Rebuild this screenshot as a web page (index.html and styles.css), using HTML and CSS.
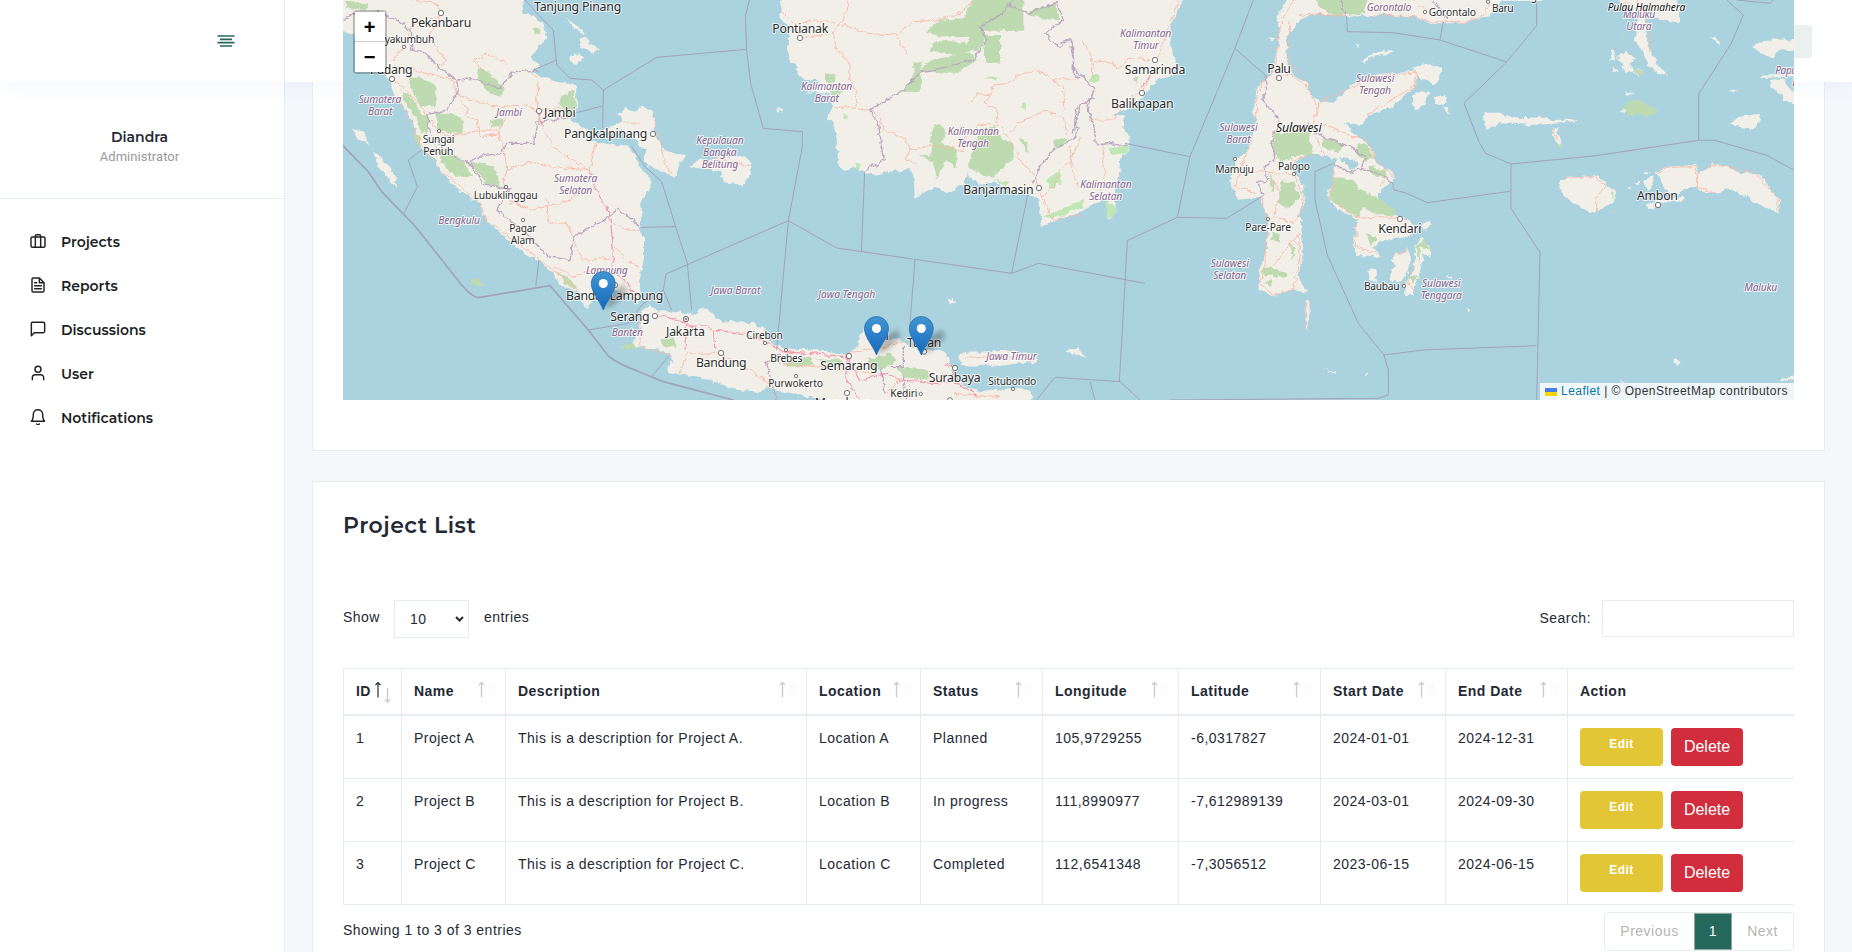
FILE: index.html
```html
<!DOCTYPE html>
<html lang="en">
<head>
<meta charset="utf-8">
<title>Projects</title>
<link rel="stylesheet" href="styles.css">
</head>
<body>
<svg width="0" height="0" class="defs">
  <defs>
    <symbol id="sort" viewBox="0 0 20 24"><path d="M4.500 17.500V3M2 5 4.500 2.500 7 5" fill="none" stroke="#c9cbcd" stroke-width="1.300"/><path d="M12 5.500h5v7h-5z" fill="none" stroke="#f5f5f6"/></symbol>
    <linearGradient id="pinfill" x1="0" y1="0" x2="0" y2="1"><stop offset="0" stop-color="#4396d2"/><stop offset="1" stop-color="#1468bd"/></linearGradient>
    <filter id="soft" x="-50%" y="-50%" width="200%" height="200%"><feGaussianBlur stdDeviation="2.500"/></filter>
    <filter id="rough" filterUnits="userSpaceOnUse" x="343" y="0" width="1451" height="400"><feTurbulence type="fractalNoise" baseFrequency=".16" numOctaves="3" seed="4"/><feDisplacementMap in="SourceGraphic" scale="6" xChannelSelector="R" yChannelSelector="G"/></filter>
    <g id="pin"><path d="M0-2 8-19 21-26 24-18 10-5z" fill="#000" opacity=".25" filter="url(#soft)"/><path d="M0-.5C-3.500-10-12-18-12-27a12 12 0 0 1 24 0C12-18 3.500-10 0-.5z" fill="url(#pinfill)" stroke="#2a6fa8" stroke-width=".8"/><circle cy="-27" r="4.500" fill="#fff"/></g>
  </defs>
</svg>

<header class="topbar">
  <div class="brand">
    <svg class="toggle" width="20" height="14" viewBox="0 0 20 14"><path d="M1.500 2h17M4 5.300h12M1.500 8.600h17M4 12h12"/></svg>
  </div>
  <div class="tools"><span class="chip"></span></div>
</header>

<div class="layout">
  <aside class="sidebar">
    <div class="profile"><h6>Diandra</h6><p>Administrator</p></div>
    <nav class="menu">
      <a><svg viewBox="0 0 24 24"><rect x="1.500" y="6" width="21" height="15.500" rx="2"/><path d="M8 21V4.500a2 2 0 0 1 2-2h4a2 2 0 0 1 2 2V21"/></svg>Projects</a>
      <a><svg viewBox="0 0 24 24"><path d="M14 1.500H5a2 2 0 0 0-2 2v17a2 2 0 0 0 2 2h14a2 2 0 0 0 2-2v-12zM14 1.500v7h7M17 13H7M17 17.500H7M10 8.500H7"/></svg>Reports</a>
      <a><svg viewBox="0 0 24 24"><path d="M22 15.500a2 2 0 0 1-2 2H6.500L2 22V4a2 2 0 0 1 2-2h16a2 2 0 0 1 2 2z"/></svg>Discussions</a>
      <a><svg viewBox="0 0 24 24"><path d="M20.500 22v-3a4.500 4.500 0 0 0-4.500-4.500H8A4.500 4.500 0 0 0 3.500 19v3"/><circle cx="12" cy="6.500" r="4.500"/></svg>User</a>
      <a><svg viewBox="0 0 24 24"><path d="M19 8A7 7 0 0 0 5 8c0 8-3 10.500-3 10.500h20S19 16 19 8M14 22.500a2.300 2.300 0 0 1-4 0"/></svg>Notifications</a>
    </nav>
  </aside>

  <main class="content">
    <section class="card map-card">
      <div class="map">
        <svg class="tiles" width="1451" height="400" viewBox="343 0 1451 400">
          <rect x="343" width="1451" height="400" fill="#abd3df"/>
          <g filter="url(#rough)">
            <g class="z" transform="translate(340 0) scale(.33333)">
              <path class="land" d="M0-20V92L40 105 100 160 130 215 150 245 165 290 185 310 215 355 228 400 222 415 240 440 290 485 300 510 330 545 370 580 420 612 430 645 460 680 510 725 560 765 600 785 640 820 655 850 700 870 725 885 732 920 750 920 755 890 780 885 800 865 830 868 850 885 880 900 893 915 905 880 900 840 912 770 912 710 900 690 905 640 900 605 930 560 935 540 900 505 890 470 865 440 780 430 740 415 750 395 720 375 690 355 712 335 708 255 650 245 605 230 570 212 600 200 575 170 590 150 622 110 610 70 570 45 545 40 550 20 555-20zM780 400 810 380 845 365 835 340 860 325 885 335 910 318 940 335 945 370 940 395 965 440 985 455 1035 462 1020 490 1010 525 1000 530 970 515 930 500 915 485 915 450 890 425 870 400 830 390zM42 390 62 388 72 405 88 435 70 425 48 408zM100 455 125 470 130 490 150 500 165 530 168 560 150 545 130 520 112 498zM690 170 715 160 730 175 712 195 698 190zM720 115 740 112 745 130 780 150 765 155 720 140zM680 55 700 70 740 100 735 105 700 85z"/>
              <path class="wood" d="M200 225 270 245 290 265 285 315 245 320 220 280zM182 270 215 290 240 340 262 345 265 400 240 390 225 350 190 300zM290 335 350 345 375 365 365 400 330 400 290 385zM270 410 300 460 360 470 400 530 350 530 315 500zM390 485 455 495 475 530 475 560 440 550zM420 205 445 215 495 270 480 290 440 275 415 240zM660 290 700 270 708 320 690 355 655 310zM450 360 490 355 490 375 460 380zM220 400 240 410 240 440 222 425zM650 818 690 835 708 865 690 862zM580 85 600 90 600 103 585 100zM10 5 85 10 80 32 30 25zM395 835 430 850 425 862 400 850z"/>
              <path class="road" d="M215 0 290 10 302 40 265 60 215 75 200 130 160 180M302 45 265 110 320 180 290 210M155 240 200 270 235 310 290 390 320 410 370 400 420 395M160 200 250 215 340 240 350 285 395 300 470 320 560 315 595 335 660 325M350 285 385 330 380 350 410 360 420 410 470 405 500 350M570 215 595 240 590 300 600 370 640 440 700 480 750 515 765 560M420 390 470 390 490 440 500 500 490 560 520 610 580 630 690 600 750 560M500 510 570 485 640 500 750 510M765 430 750 510M165 285 200 340 240 430 300 510 420 610 440 660 560 750 690 850 730 890M620 590 625 665 680 670 700 720 730 780 810 775M510 610 560 620M640 800 700 830 790 800M820 670 860 690 905 690M815 730 860 780 900 800M440 225 400 180 440 160 500 190M940 345 970 470 990 520M850 365 900 370"/>
              <path class="main" d="M750 510 770 570 808 640 818 720 820 810 860 850 890 890M595 340 610 380"/>
              <path class="border" d="M10 60 40 40 70 55 110 35 170 60 200 80 215 100 215 150 260 160 300 205 350 240 355 275 320 330 260 345 265 385 320 460 390 490 430 550 470 560 510 570 485 600 470 630 510 660 570 710 620 770 690 780 700 710 740 690 808 650 835 625 900 680M355 240 400 235 480 265 520 215 600 210M390 485 410 470 480 460 500 430 580 430 590 370 660 355 690 350"/>
            </g>
            <g class="z" transform="translate(700 0) scale(.33333)">
              <path class="land" d="M235-20 245 30 240 60 265 75 265 105 270 130 262 145 272 185 290 200 290 225 320 240 350 240 370 255 310 285 345 275 395 285 400 315 380 355 400 370 410 420 415 490 430 515 470 500 490 515 530 527 590 510 605 520 630 500 640 530 645 592 670 580 710 562 740 580 795 545 800 520 840 555 880 545 900 555 980 580 1018 595 1025 680 1080 655 1140 635 1205 600 1217 600 1230 660 1250 630 1245 570 1258 515 1260 480 1285 450 1290 410 1275 395 1270 350 1240 345 1285 325 1300 310 1330 290 1370 240 1425 225 1430 180 1415 160 1410 130 1415 75 1455-20zM-30 500-5 480 40 475 130 468 155 490 150 530 125 555 70 545 60 515zM225 325 240 322 250 330 235 338zM745 900 758 893 765 905 750 912zM-180 940-150 915-135 930-90 935-60 935-20 945 0 928 25 930 45 950 65 965 100 962 140 970 165 968 170 980 195 985 190 1005 215 1030 250 1045 320 1048 400 1055 440 1065 465 1050 480 1005 495 990 540 1000 560 1020 600 1018 630 1040 650 1050 720 1050 742 1062 755 1110 765 1140 800 1165 850 1175 920 1165 985 1170 1000 1190 985 1220 420 1220 350 1195 300 1185 240 1172 205 1160 180 1180 100 1168 60 1150 0 1130-95 1120-100 1100-80 1085-90 1060-140 1045-205 1045-200 1020-175 990zM775 1070 790 1055 940 1052 1010 1070 1010 1085 960 1090 880 1100 790 1095zM1100 1050 1140 1045 1140 1062 1110 1060z"/>
              <path class="wood" d="M825-20H970V92H845L860 110 835 150 800 160 835 178 770 218 715 218 665 210 680 185 770 165 690 155 695 130 740 122 800 130 810 110 760 112 700 105 675 95 720 60 790 55zM975 40 1065 8 1078 60 1035 58 1000 45zM855 105H900V188H855zM640 185 665 190 662 275H602L640 235zM820 430 850 395 885 380 910 420 940 430 940 475 880 530 850 525 805 500 815 460zM375 220 410 225 400 248 380 245zM390 270 425 275 420 290 395 285zM690 420 700 372 735 380 740 400 725 430 770 450 770 505 740 480 710 535 700 490 655 460 690 470 700 440zM1060 420 1100 415 1090 445 1060 440zM955 415 985 420 985 465zM500 1080 570 1060 590 1085 540 1110 510 1100zM590 1100 690 1110 680 1140 610 1130zM350 1075 430 1080 400 1100zM250 1085 330 1070 340 1095 270 1100zM-120 1020-80 1010-70 1040-110 1040zM-225 1035-200 1030-185 1048-240 1045z"/>
              <path class="scrub" d="M465 490 485 488 480 510 465 505zM1040 540 1080 510 1085 545 1050 570zM1030 650 1080 630 1150 600 1150 620 1060 655zM1215 600 1240 610 1250 640 1225 660zM1230 445 1285 435 1280 460 1230 465zM885 540 930 545 920 560zM850 235 890 232 890 242zM430 340 440 342 440 358 430 355zM965 310 978 305 978 330zM1170 225 1195 225 1195 245 1170 245z"/>
              <path class="road" d="M245 35 280 70 350 60 430 75 500 100 590 105 640 65 720 60 790 35 815 0M300 115 400 100 440 40 445 0M590 105 600 130 625 160M400 100 410 150 450 190 450 240 470 280 468 325 510 328 540 350 550 390 615 415 630 450 615 480 650 490M400 320 468 325M630 450 700 435 790 455 800 400 850 370 900 380 930 420 960 480 1005 530 1030 600 1060 660 1140 640M930 400 960 365 1000 350 1030 330 1090 350 1100 400M805 310 830 280 870 285 880 255 930 250 960 220 1010 210 1060 240 1140 235M1060 240 1090 260 1095 330M870 285 855 310 890 330 895 370M1030 590 1060 560 1080 510 1110 490 1140 410M1110 440 1120 530 1140 560M1175 180 1240 190 1250 210 1290 175 1370 180 1410 70 1435 0M1360 215 1330 270 1300 290 1240 360 1170 360M1150 120 1175 180 1180 240M1205 430 1215 520 1200 590M440 1060 560 1040 620 1020M230 1090 340 1100 440 1110 530 1120M560 1180 600 1140M760 1180 900 1190M60 1060 150 1110 220 1160M-180 960-180 1040-80 1070M-60 1120-40 1060 60 1060M790 1075 900 1070 1000 1080M40 475 150 500"/>
              <path class="main" d="M-135 945-60 960-20 980 0 975 40 990 130 1000 190 1020 250 1055 440 1070 480 1140 560 1120 600 1140 750 1150 765 1110 740 1090M-40 960-45 1050M40 990 45 1050M765 1150 830 1185M440 1070 440 1140 480 1200"/>
              <path class="border" d="M940 0 900 45 840 80 860 120 820 180 720 205 665 215 600 275 510 330 535 370 550 480 495 510M925 15 990 40 1070 8 1090 60 1060 80 1035 100 1080 145 1110 120 1120 150 1120 220 1140 235M995 550 1020 500 1060 450 1130 410 1130 370 1140 310M1080 130 1110 120 1125 210 1185 265 1160 320 1180 370 1190 435 1230 430 1280 440M1120 400 1130 320 1185 290M195 1090 240 1060M200 1090 215 1150 230 1200M560 1100 610 1100 610 1040M545 1105 555 1180M610 1130 620 1200"/>
            </g>
            <g class="z" transform="translate(1060 0) scale(.33333)">
              <path class="land" d="M690-20 650 60 660 100 645 180 640 220 615 235 590 270 580 340 590 360 570 430 555 460 530 475 510 540 525 585 535 600 600 590 615 640 625 660 620 760 600 800 595 870 640 888 700 865 740 878 715 830 730 750 720 640 735 600 730 560 705 520 700 490 740 465 790 465 830 480 820 500 825 550 795 585 830 625 890 660 880 740 890 765 960 770 940 740 960 725 1040 710 1075 690 1050 665 1000 640 960 600 960 570 990 550 1010 530 985 510 950 490 940 450 880 400 850 365 905 375 925 345 1000 320 1060 260 1075 225 1120 255 1140 240 1145 205 1110 190 1055 200 1065 215 970 220 900 240 870 260 825 305 780 300 755 290 740 250 700 225 680 180 680 110 720 60 770 40 860 50 980 45 1060 50 1110 70 1200 70 1290 45 1345-20zM998 770 1045 745 1048 800 1025 850 990 840 1000 800zM1065 740 1085 715 1110 740 1112 770 1090 760 1080 820 1065 860 1060 885 1035 885 1040 840 1065 800zM925 810 945 808 955 850 930 840zM1085 670 1110 660 1115 675 1095 690zM738 900 748 905 750 950 742 998 736 950zM625 112 645 115 640 130zM905 185 940 160 990 150 1000 158 940 170 910 188zM1060 290 1080 272 1110 280 1090 315 1070 328 1058 310zM1120 290 1155 285 1160 312 1130 310zM1150 325 1168 325 1165 348zM25 1052 60 1050 80 1070 40 1065zM785 1105 830 1115 830 1120zM885 132 900 130 898 138zM1155 830 1175 830 1175 840zM915 1115 925 1115 920 1128z"/>
              <path class="wood" d="M770-10H920L915 40 830 48 775 20zM640 400 745 395 760 465 700 468 670 485 640 460zM785 415 850 430 840 455 790 445zM890 430 920 435 945 475 915 485 890 460zM925 500 980 510 970 535 930 520zM825 530 880 540 900 570 950 590 1005 630 1000 648 950 640 905 625 895 655 840 620 805 590zM665 545 700 545 720 590 690 625 650 610zM625 520 645 545 640 580zM635 700 660 700 655 730 635 715zM610 800 680 815 680 830 610 825zM690 730 705 740 700 780zM920 700 955 715 930 735zM1068 740 1095 718 1110 750 1085 740 1075 785zM1040 830 1075 825 1060 850zM615 845 635 840 630 860zM215 235 240 230 230 250z"/>
              <path class="road" d="M700 0 665 60 655 130 645 210 610 240 590 290 590 360 570 440 545 500 525 560 585 580M660 235 690 220 750 270 770 320 760 380 790 465M720 50 770 40 860 50M690 60 685 180 740 245M780 305 770 350M940 45 1060 50 1110 65 1200 65M780 305 880 260 970 225 1070 220 1060 260 920 345M780 370 850 400 920 420 950 480 1000 530M590 515 660 520 700 520 730 590 720 640 700 670 650 650M605 590 620 660 615 790 600 850 640 885 700 865 720 770 715 700 640 800M640 540 660 590 640 650M700 720 720 740M820 500 825 550 800 590 890 655 970 650 1040 660M960 560 980 520M890 670 885 740 950 760M1060 800 1040 850 1070 870M740 900 740 990M1000 770 1040 750M700 480 760 465M1060 0 1100 30"/>
              <path class="main" d="M290 205 240 265"/>
              <path class="border" d="M615 225 620 270 605 300 650 350 660 370 635 410 645 480 615 500 620 540 590 550 610 590M745 370 785 410 870 440 915 470 905 505 870 520 820 490M905 505 980 530 1005 570M840 0 860 50M1120 0 1160 60"/>
              <path class="lake" d="M840 470 870 475 895 490 880 512 865 505zM735 460 750 470 740 475z"/>
            </g>
            <g class="z" transform="translate(1440 0) scale(.33333)">
              <path class="land" d="M530-20 545 10 590 40 590 60 585 120 610 160 630 200 655 215 685 232 655 195 635 165 625 130 615 90 620 50 655 55 720 70 720 30 700-20zM510 150 525 148 528 180 515 180zM535 165 560 155 582 175 570 190 580 215 555 218 550 195 537 185zM518 200 535 210 520 215zM580 215 595 205 610 215 595 228zM555 272 585 282 560 284zM130 350 135 338 180 338 205 345 240 355 300 352 340 360 415 358 415 362 360 370 280 375 200 370 175 372 135 388zM337 385 350 380 360 420 365 440 350 430 340 410zM865 368 900 350 955 342 960 360 935 390 900 380zM935 135 990 118 1072 120V155L1020 150 1000 175 960 160zM990 240 1030 235 1045 260 1072 280V310L1030 305 1020 280 995 265zM960 228 1072 218V228L965 235zM858 270 895 270 880 278zM808 108 840 125 843 135 820 125zM357 550 365 538 400 530 470 528 500 545 505 560 525 570V600L490 625 455 638 420 620 375 590 360 570zM645 515 680 500 770 495 778 520 800 510 820 490 860 500 905 520 955 520 980 545 990 570 1022 600 1015 638 980 625 920 590 870 565 835 580 790 575 765 560 720 575 700 590 670 560 655 530zM610 520 628 512 618 525zM612 540 640 530 640 555 625 575zM560 562 580 562 570 568zM582 550 600 543 600 552zM620 618 650 600 730 590 730 602 680 605 630 628zM700 1085 712 1078 722 1088 710 1098zM1015 1140 1072 1125V1133L1030 1145zM540 1140 555 1145 545 1150zM340 1195 400 1165 430 1150 450 1165 400 1200zM77 918 90 930 85 938zM545 330 565 320 555 340z"/>
              <path class="wood" d="M548 320 580 297 600 300 650 330 650 342 605 345 560 343zM582 212 595 206 610 215 598 226zM512 575 520 575 520 600zM348 430 362 432 362 446 352 444zM545 95 552 98 550 115zM512 635 525 635 522 642z"/>
              <path class="road" d="M370 535 460 530 500 555 470 590 470 635M650 520 680 502 770 500 770 560 830 580M780 520 820 495 860 500 950 522 1015 600 1010 630M340 385 352 420M590 0 620 60 630 160M550 5 580 20M60 70 130 45 150 10"/>
            </g>
          </g>

          <g class="sea" transform="translate(340 0) scale(.33333)">
            <path class="wide" d="M0 428 85 515 125 575 225 678 365 855Q395 890 415 893L630 857 745 990 805 1068Q840 1095 890 1112L970 1145 1180 1200"/>
            <path d="M555 0 600 50 640 90 650 195 690 235 755 240 790 270 950 172 1220 148 1216 50 1228 0M790 270 788 385M650 180 580 210M788 318 710 338M875 440 915 500 965 545 1007 680 1042 790 1055 930M900 682 1007 680M245 450 205 480 232 560 192 640M597 780 587 860M745 990 865 970 905 915 970 870 978 822 1345 662 1387 440V395L1270 385 1232 250 1220 150M1345 662 1490 744 2015 820 2095 790 2415 850M1345 662 1310 1050M1574 515 1564 755M1725 780 1710 970M2064 580 2015 820M970 870 995 930M985 1070 935 1130M2090 1200 2145 1132 2340 1145 2400 1200M2250 1145 2265 1200"/>
            <path d="M2740 0 2685 145 2550 470 2512 652 2362 722 2355 850 2338 1145M2355 430 2550 470M2512 652 2660 655 2765 590M2685 145 2775 225M2980 490 2925 515V600L2962 765 3055 970 3132 1065 3145 1110V1185L3115 1195 2490 1200M3132 1065 3250 1050 3590 1037M3165 570 3200 580 3262 608 3510 574M3020 50 3022 95 3160 98 3300 120 3500 186M3310 65 3300 120"/>
            <path d="M3590 0V77L3500 186 3372 310 3418 428 3437 460 3513 492V625L3600 757 3590 1200M3513 492 3760 468 4076 421V282L4173 132 4210 45 4160 0M4076 421H4125L4280 466 4370 515M4190 0 4290 10 4300 0"/>
          </g>

          <g class="dots" transform="translate(340 0) scale(.33333)">
            <circle cx="303" cy="39" r="8"/><circle cx="192" cy="141" r="5"/><circle cx="156" cy="237" r="8"/><circle cx="297" cy="393" r="5"/><circle cx="597" cy="333" r="8"/><circle cx="939" cy="402" r="8"/><circle cx="498" cy="561" r="5"/><circle cx="549" cy="660" r="5"/><circle cx="825" cy="855" r="8"/><circle cx="945" cy="948" r="8"/><circle cx="1038" cy="957" r="8"/><circle cx="1038" cy="957" r="3"/><circle cx="1143" cy="1059" r="8"/>
            <circle cx="1380" cy="114" r="8"/><circle cx="2097" cy="564" r="8"/><circle cx="1275" cy="1029" r="5"/><circle cx="1338" cy="1050" r="5"/><circle cx="1527" cy="1068" r="8"/><circle cx="1368" cy="1128" r="5"/><circle cx="1521" cy="1179" r="8"/><circle cx="1742" cy="1182" r="5"/><circle cx="1845" cy="1104" r="8"/><circle cx="2019" cy="1167" r="5"/><circle cx="1830" cy="1200" r="7"/><circle cx="1752" cy="1055" r="8"/>
            <circle cx="2445" cy="180" r="8"/><circle cx="2406" cy="279" r="8"/><circle cx="2817" cy="234" r="8"/><circle cx="2685" cy="477" r="5"/><circle cx="2862" cy="522" r="5"/><circle cx="2784" cy="657" r="5"/><circle cx="3180" cy="657" r="8"/><circle cx="3192" cy="858" r="5"/><circle cx="3255" cy="36" r="5"/><circle cx="3954" cy="615" r="8"/><circle cx="3444" cy="5" r="5"/>
          </g>

          <g class="labels" transform="translate(340 0) scale(.33333)">
            <g class="p">
              <text x="56" y="308" textLength="128">Sumatera</text><text x="84" y="344" textLength="73">Barat</text>
              <text x="469" y="349" textLength="77">Jambi</text>
              <text x="642" y="545" textLength="130">Sumatera</text><text x="658" y="581" textLength="99">Selatan</text>
              <text x="295" y="671" textLength="125">Bengkulu</text>
              <text x="738" y="821" textLength="125">Lampung</text>
              <text x="815" y="1008" textLength="94">Banten</text>
              <text x="1069" y="433" textLength="142">Kepulauan</text><text x="1089" y="469" textLength="101">Bangka</text><text x="1085" y="505" textLength="110">Belitung</text>
              <text x="1112" y="883" textLength="149">Jawa Barat</text>
              <text x="1435" y="895" textLength="171">Jawa Tengah</text>
              <text x="1939" y="1079" textLength="152">Jawa Timur</text>
              <text x="1383" y="269" textLength="154">Kalimantan</text><text x="1424" y="305" textLength="73">Barat</text>
              <text x="1823" y="405" textLength="154">Kalimantan</text><text x="1852" y="441" textLength="95">Tengah</text>
              <text x="2340" y="111" textLength="154">Kalimantan</text><text x="2379" y="146" textLength="78">Timur</text>
              <text x="2221" y="564" textLength="154">Kalimantan</text><text x="2248" y="600" textLength="99">Selatan</text>
              <text x="2638" y="393" textLength="115">Sulawesi</text><text x="2659" y="428" textLength="73">Barat</text>
              <text x="3048" y="247" textLength="115">Sulawesi</text><text x="3057" y="283" textLength="96">Tengah</text>
              <text x="2612" y="801" textLength="115">Sulawesi</text><text x="2620" y="837" textLength="99">Selatan</text>
              <text x="3246" y="861" textLength="116">Sulawesi</text><text x="3242" y="897" textLength="124">Tenggara</text>
              <text x="3080" y="34" textLength="134">Gorontalo</text>
              <text x="3849" y="55" textLength="97">Maluku</text><text x="3859" y="90" textLength="76">Utara</text>
              <text x="4213" y="872" textLength="99">Maluku</text>
              <text x="4306" y="221" textLength="82">Papua</text><text x="4357" y="257" textLength="72">Barat</text>
            </g>
            <text x="582" y="34" textLength="262">Tanjung Pinang</text>
            <text x="213" y="82" textLength="181">Pekanbaru</text>
            <text class="t" x="134" y="130" textLength="149">yakumbuh</text>
            <text x="90" y="223" textLength="128">Padang</text>
            <text x="612" y="350" textLength="95">Jambi</text>
            <text x="672" y="415" textLength="250">Pangkalpinang</text>
            <text class="t" x="248" y="430" textLength="95">Sungai</text><text class="t" x="250" y="466" textLength="90">Penuh</text>
            <text class="t" x="401" y="596" textLength="192">Lubuklinggau</text>
            <text class="t" x="508" y="696" textLength="81">Pagar</text><text class="t" x="512" y="732" textLength="72">Alam</text>
            <text x="678" y="899" textLength="292">Bandar Lampung</text>
            <text x="811" y="962" textLength="118">Serang</text>
            <text x="978" y="1007" textLength="117">Jakarta</text>
            <text x="1068" y="1102" textLength="152">Bandung</text>
            <text class="t" x="1219" y="1018" textLength="110">Cirebon</text>
            <text class="t" x="1291" y="1087" textLength="96">Brebes</text>
            <text x="1441" y="1111" textLength="172">Semarang</text>
            <text class="t" x="1285" y="1161" textLength="164">Purwokerto</text>
            <text x="1424" y="1222" textLength="165">Magelang</text>
            <text x="1580" y="1020" textLength="66">Pati</text>
            <text x="1701" y="1040" textLength="103">Tuban</text>
            <text x="1766" y="1146" textLength="156">Surabaya</text>
            <text class="t" x="1945" y="1154" textLength="144">Situbondo</text>
            <text class="t" x="1651" y="1192" textLength="81">Kediri</text>
            <text x="1297" y="99" textLength="168">Pontianak</text>
            <text x="1870" y="582" textLength="211">Banjarmasin</text>
            <text x="2354" y="223" textLength="182">Samarinda</text>
            <text x="2313" y="324" textLength="188">Balikpapan</text>
            <text x="2782" y="219" textLength="71">Palu</text>
            <text class="isl" x="2808" y="396" textLength="137">Sulawesi</text>
            <text class="t" x="2626" y="518" textLength="116">Mamuju</text>
            <text class="t" x="2814" y="509" textLength="96">Palopo</text>
            <text class="t" x="2716" y="692" textLength="137">Pare-Pare</text>
            <text x="3115" y="699" textLength="129">Kendari</text>
            <text class="t" x="3072" y="869" textLength="107">Baubau</text>
            <text class="t" x="3266" y="49" textLength="142">Gorontalo</text>
            <text class="t" x="3456" y="0" textLength="150">Kotamobagu</text><text class="t" x="3456" y="36" textLength="65">Baru</text>
            <text x="3891" y="601" textLength="123">Ambon</text>
            <text class="isl s" x="3803" y="32" textLength="233">Pulau Halmahera</text>
          </g>
          <use href="#pin" x="603.300" y="310.500"/><use href="#pin" x="876.500" y="355.500"/><use href="#pin" x="921.300" y="355.500"/>
        </svg>
        <div class="zoom"><button>+</button><button>−</button></div>
        <div class="attribution"><svg width="12" height="8"><path fill="#4c7be1" d="M0 0h12v4H0z"/><path fill="#ffd500" d="M0 4h12v4H0z"/></svg><span><a>Leaflet</a> | © OpenStreetMap contributors</span></div>
      </div>
    </section>

    <section class="card list-card">
      <h5>Project List</h5>
      <div class="controls">
        <label class="length"><span>Show</span> <span class="select">10<svg width="9" height="6" viewBox="0 0 9 6"><path d="M1 1l3.500 3.500L8 1"/></svg></span> <span>entries</span></label>
        <label>Search: <input type="text"></label>
      </div>
      <table>
        <colgroup><col class="w1"><col class="w2"><col class="w3"><col class="w4"><col class="w5"><col class="w6"><col class="w7"><col class="w8"><col class="w9"><col></colgroup>
        <thead><tr>
          <th><div>ID<svg viewBox="0 0 20 24"><path d="M5 17.500V3M2.500 5 5 2.500 7.500 5" fill="none" stroke="#2a3039" stroke-width="1.200"/><path d="M14.500 8v14M12 19.500l2.500 2.500 2.500-2.500" fill="none" stroke="#c9cbcd" stroke-width="1.300"/></svg></div></th>
          <th><div>Name<svg><use href="#sort"/></svg></div></th>
          <th><div>Description<svg><use href="#sort"/></svg></div></th>
          <th><div>Location<svg><use href="#sort"/></svg></div></th>
          <th><div>Status<svg><use href="#sort"/></svg></div></th>
          <th><div>Longitude<svg><use href="#sort"/></svg></div></th>
          <th><div>Latitude<svg><use href="#sort"/></svg></div></th>
          <th><div>Start Date<svg><use href="#sort"/></svg></div></th>
          <th><div>End Date<svg><use href="#sort"/></svg></div></th>
          <th><div>Action</div></th>
        </tr></thead>
        <tbody>
          <tr><td>1</td><td>Project A</td><td>This is a description for Project A.</td><td>Location A</td><td>Planned</td><td>105,9729255</td><td>-6,0317827</td><td>2024-01-01</td><td>2024-12-31</td><td><div class="actions"><a class="edit">Edit</a><button class="delete">Delete</button></div></td></tr>
          <tr><td>2</td><td>Project B</td><td>This is a description for Project B.</td><td>Location B</td><td>In progress</td><td>111,8990977</td><td>-7,612989139</td><td>2024-03-01</td><td>2024-09-30</td><td><div class="actions"><a class="edit">Edit</a><button class="delete">Delete</button></div></td></tr>
          <tr><td>3</td><td>Project C</td><td>This is a description for Project C.</td><td>Location C</td><td>Completed</td><td>112,6541348</td><td>-7,3056512</td><td>2023-06-15</td><td>2024-06-15</td><td><div class="actions"><a class="edit">Edit</a><button class="delete">Delete</button></div></td></tr>
        </tbody>
      </table>
      <div class="table-foot">
        <span class="info">Showing 1 to 3 of 3 entries</span>
        <div class="pages"><a class="prev">Previous</a><a class="current">1</a><a class="next">Next</a></div>
      </div>
    </section>
  </main>
</div>
</body>
</html>
```
FILE: styles.css
```css
* { box-sizing: border-box; }
body { margin: 0; height: 952px; overflow: hidden; background: #f5f7fb; color: #242934; font: 14px/21px "Liberation Sans", Arial, sans-serif; letter-spacing: .48px; }
.defs { position: absolute; }
button { font: inherit; border: 0; padding: 0; }

/* Fixed top bar */
.topbar { position: fixed; top: 0; left: 0; right: 0; height: 82px; z-index: 5; display: flex; background: #fff; box-shadow: 0 0 20px rgba(89, 140, 220, .1); }
.brand { width: 285px; border-right: 1px solid #e6edef; display: flex; align-items: center; justify-content: flex-end; padding-right: 48px; }
.toggle { fill: none; stroke: #24695c; stroke-width: 1.7; }
.tools { flex: 1; display: flex; align-items: center; justify-content: flex-end; padding-right: 40px; }
.chip { width: 33px; height: 33px; border-radius: 4px; background: #e9f0ee; }

.layout { display: flex; height: 952px; overflow: hidden; }
.sidebar { width: 285px; padding-top: 82px; background: #fff; border-right: 1px solid #e6edef; flex: none; }
.profile { height: 117px; padding: 45px 5px 0 0; border-bottom: 1px solid #e6edef; text-align: center; }
.profile h6 { margin: 0; font: 600 14px/21px Montserrat, Inter, sans-serif; letter-spacing: 0; }
.profile p { margin: 0; font: 13px/18px Roboto, sans-serif; color: #999; letter-spacing: .05px; }
.menu { display: flex; flex-direction: column; padding: 21px 0 0 30px; }
.menu a { display: flex; align-items: center; gap: 15px; height: 44px; font: 600 14px/20px Montserrat, Inter, sans-serif; letter-spacing: 0; color: #1d1f24; }
.menu svg { width: 16px; height: 16px; margin-top: -2px; fill: none; stroke: #222; stroke-width: 2.2; stroke-linejoin: round; stroke-linecap: round; }

.content { flex: 1; padding: 0 27px; }
.card { background: #fff; border: 1px solid #e6edef; padding: 0 30px; }
.map-card { height: 451px; border-top: 0; margin-bottom: 30px; }
.map { position: relative; z-index: 10; width: 1451px; height: 400px; overflow: hidden; }
.tiles { display: block; }
.land { fill: #f2efe9; }
.wood { fill: #bedab0; }
.scrub { fill: #bfe6b4; }
.lake { fill: #abd3df; }
.road, .main, .border { fill: none; stroke: #f8b9a7; stroke-width: 2.7; }
.main { stroke: #f19aac; stroke-width: 3.5; }
.border { stroke: #bba7bf; stroke-width: 4; }
.sea path { fill: none; stroke: #9f9ab8; stroke-width: 3; opacity: .85; }
.sea .wide { stroke-width: 5; }
.dots circle { fill: #fff; stroke: #5d5b58; stroke-width: 2.5; }
.labels { font: 37px "Noto Sans", sans-serif; fill: #2b2b2b; letter-spacing: 0; }
.labels text { stroke: rgba(255, 255, 255, .75); stroke-width: 6px; stroke-linejoin: round; paint-order: stroke; }
.labels .t { font-size: 31px; }
.labels .isl { font-style: italic; fill: #111; }
.labels .s { font-size: 31px; }
.labels .p { font-size: 31px; font-style: italic; fill: #85628c; }

.zoom { position: absolute; left: 10px; top: 10px; border: 2px solid rgba(0, 0, 0, .22); border-radius: 4px; background-clip: padding-box; }
.zoom button { display: block; width: 30px; height: 30px; padding-right: 1px; background: #fff; font: bold 20px/28px "Liberation Sans", sans-serif; letter-spacing: 0; color: #000; }
.zoom button:first-child { border-bottom: 1px solid #ccc; }
.attribution { position: absolute; right: 0; bottom: 0; width: 254px; height: 17px; display: flex; align-items: center; gap: 4px; padding-left: 5px; background: rgba(255, 255, 255, .8); font-size: 12px; line-height: 17px; color: #333; white-space: nowrap; }
.attribution a { color: #0078a8; }

.list-card { height: 471px; border-bottom: 0; }
h5 { margin: 0; padding-top: 29px; font: 600 22px/30px Montserrat, Inter, sans-serif; letter-spacing: .48px; }
.controls { display: flex; justify-content: space-between; padding-top: 59px; height: 127px; }
.controls label { display: flex; height: 37px; align-items: center; }
.length span:not(.select) { margin-top: -2px; }
.select { width: 75px; height: 38px; border: 1px solid #e6edef; margin: 1px 15px 0 14px; padding: 0 4px 0 15px; display: flex; align-items: center; justify-content: space-between; }
.select svg { fill: none; stroke: #242934; stroke-width: 2; }
.controls input { width: 192px; height: 37px; border: 1px solid #e9ecec; margin-left: 11px; }

table { width: 1451px; table-layout: fixed; border-collapse: separate; border-spacing: 0; border-top: 1px solid #e6edef; }
.w1 { width: 58px; } .w2 { width: 104px; } .w3 { width: 301px; } .w4 { width: 114px; } .w5 { width: 122px; }
.w6 { width: 136px; } .w7 { width: 142px; } .w8 { width: 125px; } .w9 { width: 122px; }
th, td { border-left: 1px solid #e6edef; border-bottom: 1px solid #e6edef; padding: 12px 0 0 12px; text-align: left; vertical-align: top; white-space: nowrap; }
th { height: 47px; border-bottom-width: 2px; padding: 0 8px 0 12px; vertical-align: middle; }
th div { display: flex; justify-content: space-between; align-items: center; }
th svg { width: 20px; height: 24px; margin-left: -10px; }
td { height: 63px; }
.actions { display: flex; gap: 8px; }
.edit { width: 83px; height: 38px; border-radius: 4px; background: #e2c636; color: #fff; font-weight: bold; font-size: 12px; line-height: 32px; text-align: center; }
.delete { width: 72px; height: 38px; padding-bottom: 2px; border-radius: 4px; background: #d22d3d; color: #fff; font-size: 16px; letter-spacing: 0; }
.table-foot { display: flex; justify-content: space-between; padding-top: 7px; }
.info { padding-top: 8px; }
.pages { display: flex; height: 39px; width: 190px; border: 1px solid #e6edef; border-radius: 4px; line-height: 37px; text-align: center; color: #b5b5b5; }
.prev { width: 89px; }
.current { width: 38px; background: #24695c; color: #fff; border: 1px solid #8fa5a0; line-height: 35px; }
.next { flex: 1; }
```
